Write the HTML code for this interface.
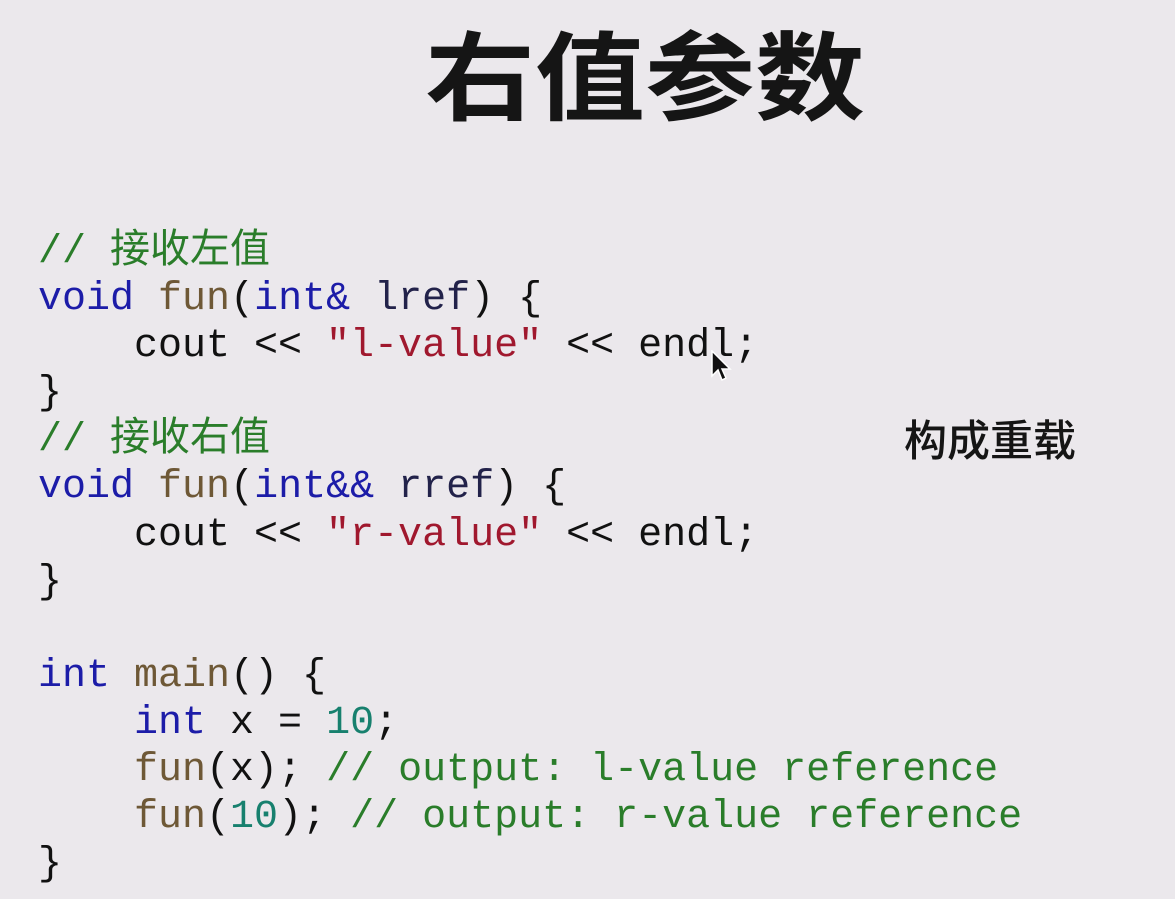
<!DOCTYPE html>
<html><head><meta charset="utf-8"><style>
html,body{margin:0;padding:0;}
body{width:1175px;height:899px;background:#ebe8ec;position:relative;overflow:hidden;}
.t{position:absolute;left:425px;top:12px;font:bold 110px/1.2 "Noto Sans CJK SC",sans-serif;color:#151515;letter-spacing:0px;transform:scaleY(0.88);transform-origin:0 0;}
.s{position:absolute;left:904px;top:413px;font:500 43px/1.2 "Noto Sans CJK SC",sans-serif;color:#151515;}
pre{position:absolute;left:38px;top:229px;margin:0;font:40px/47.1px "Liberation Mono","Noto Sans CJK SC",monospace;letter-spacing:0px;color:#111;}
.c{color:#2a7d2a}.k{color:#1c1ca8}.f{color:#6e5836}.r{color:#a0182e}.n{color:#17806e}.v{color:#22224a}
</style></head><body>
<div class="t">右值参数</div>
<div class="s">构成重载</div>
<pre><span class="c">// 接收左值</span>
<span class="k">void</span> <span class="f">fun</span>(<span class="k">int&amp;</span> <span class="v">lref</span>) {
    cout &lt;&lt; <span class="r">"l-value"</span> &lt;&lt; endl;
}
<span class="c">// 接收右值</span>
<span class="k">void</span> <span class="f">fun</span>(<span class="k">int&amp;&amp;</span> <span class="v">rref</span>) {
    cout &lt;&lt; <span class="r">"r-value"</span> &lt;&lt; endl;
}

<span class="k">int</span> <span class="f">main</span>() {
    <span class="k">int</span> x = <span class="n">10</span>;
    <span class="f">fun</span>(x); <span class="c">// output: l-value reference</span>
    <span class="f">fun</span>(<span class="n">10</span>); <span class="c">// output: r-value reference</span>
}</pre>
<svg style="position:absolute;left:710px;top:350px" width="24" height="34" viewBox="0 0 24 34"><path d="M2 1 L2 26 L8 20 L12 30 L16 28 L12 19 L20 19 Z" fill="#111" stroke="#fff" stroke-width="1.5"/></svg>
</body></html>
